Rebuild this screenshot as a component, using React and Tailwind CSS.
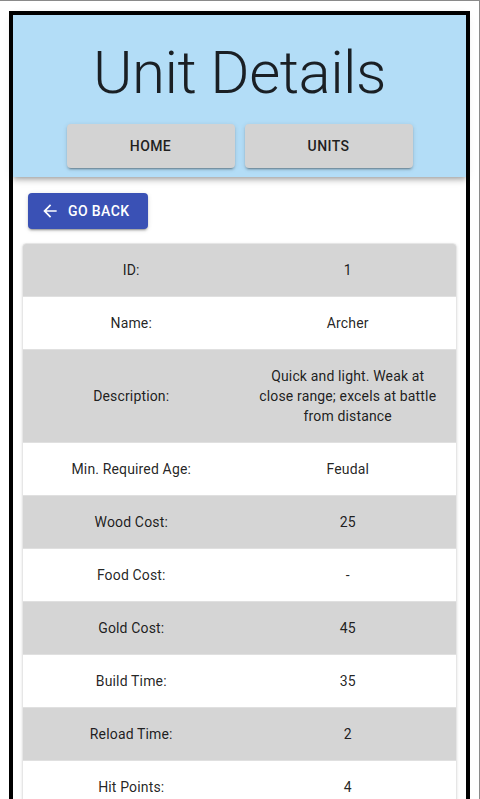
import React from "react";

const rows = [
  ["ID:", "1"],
  ["Name:", "Archer"],
  ["Description:", "Quick and light. Weak at close range; excels at battle from distance"],
  ["Min. Required Age:", "Feudal"],
  ["Wood Cost:", "25"],
  ["Food Cost:", "-"],
  ["Gold Cost:", "45"],
  ["Build Time:", "35"],
  ["Reload Time:", "2"],
  ["Hit Points:", "4"],
  ["Attack:", "4"],
];

function NavButton({ children }) {
  return (
    <button className="w-[168px] h-[44px] rounded bg-[#d3d3d3] text-[14px] font-medium tracking-[0.4px] uppercase text-[#1f1f1f] shadow-[0_3px_1px_-2px_rgba(0,0,0,0.2),0_2px_2px_0_rgba(0,0,0,0.14),0_1px_5px_0_rgba(0,0,0,0.12)]">
      {children}
    </button>
  );
}

export default function App() {
  return (
    <div
      className="min-h-[799px] h-[799px] overflow-hidden bg-white border-t border-r border-[#8a8a8a] px-[9px] pt-[10px]"
      style={{ fontFamily: "Roboto, 'Liberation Sans', sans-serif" }}
    >
      <div className="border-4 border-black h-[900px] bg-white">
        <header className="bg-[#b3ddf7] pt-[22px] pb-[9px] flex flex-col items-center shadow-[0_2px_4px_-1px_rgba(0,0,0,0.2),0_4px_5px_0_rgba(0,0,0,0.14),0_1px_10px_0_rgba(0,0,0,0.12)] relative z-10">
          <h1 className="text-[60px] leading-[72px] font-light tracking-[-0.5px] text-[#1a1f24]">
            Unit Details
          </h1>
          <div className="flex gap-[10px] mt-[15px]">
            <NavButton>Home</NavButton>
            <NavButton>Units</NavButton>
          </div>
        </header>

        <div className="px-[9px] pt-[16px]">
          <button className="ml-[6px] h-[36px] w-[120px] rounded bg-[#3a51b5] text-white text-[14px] font-medium tracking-[0.4px] uppercase flex items-center pl-[12px] shadow-[0_3px_1px_-2px_rgba(0,0,0,0.2),0_2px_2px_0_rgba(0,0,0,0.14),0_1px_5px_0_rgba(0,0,0,0.12)]">
            <svg viewBox="0 0 24 24" className="w-[20px] h-[20px] fill-current mr-[8px]">
              <path d="M20 11H7.83l5.59-5.59L12 4l-8 8 8 8 1.41-1.41L7.83 13H20v-2z" />
            </svg>
            Go Back
          </button>

          <div className="mt-[14px] rounded border border-[#e6e6e6] overflow-hidden shadow-[0_1px_3px_0_rgba(0,0,0,0.12)]">
            <table className="w-full table-fixed border-collapse text-[14px] text-[rgba(0,0,0,0.87)] tracking-[0.15px]">
              <tbody>
                {rows.map(([label, value], i) => (
                  <tr key={label} className={i % 2 === 0 ? "bg-[#d5d5d5]" : "bg-white"}>
                    <td className="p-4 text-center leading-[20px] border-b border-[#e0e0e0]">
                      {label}
                    </td>
                    <td className="p-4 text-center leading-[20px] border-b border-[#e0e0e0]">
                      {value}
                    </td>
                  </tr>
                ))}
              </tbody>
            </table>
          </div>
        </div>
      </div>
    </div>
  );
}
